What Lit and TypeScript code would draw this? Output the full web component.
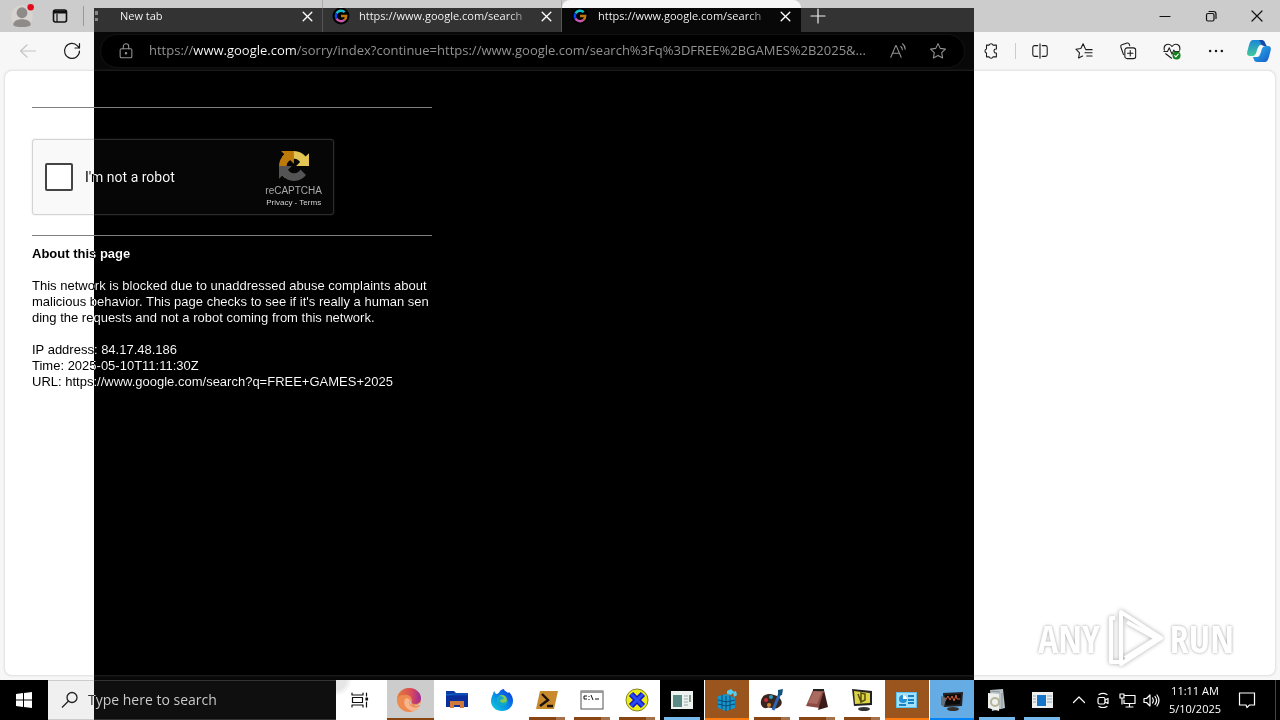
import { LitElement, html, css, svg, nothing } from "lit";
import { customElement, property } from "lit/decorators.js";

const icon = (size: number, body: unknown, box = "0 0 20 20") => html`<svg
  width=${size} height=${size} viewBox=${box} fill="none" stroke="currentColor"
  stroke-width="1.2" stroke-linecap="round" stroke-linejoin="round" aria-hidden="true">${body}</svg>`;

const glyph = {
  close: icon(13, svg`<path d="M2 2l8 8M10 2l-8 8"/>`, "0 0 12 12"),
  plus: icon(16, svg`<path d="M8 1v14M1 8h14"/>`, "0 0 16 16"),
  profile: icon(26, svg`<circle cx="12" cy="12" r="10" fill="#d6d3d1" stroke="none"/><circle cx="12" cy="9" r="5" fill="#8f8b88" stroke="none"/><path d="M4 20c0-3 3-5 8-5s8 2 8 5-16 3-16 0z" fill="#8f8b88" stroke="none"/><circle cx="20" cy="4" r="3" fill="#e00b1c" stroke="none"/>`, "0 0 24 24"),
  workspace: icon(16, svg`<rect x="1.5" y="2" width="13" height="12" rx="2" stroke-width="1.6"/><path d="M2 3h12v2H2z" fill="#111"/><path d="M5 6v7.500"/>`, "0 0 16 16"),
  minimize: icon(12, svg`<path d="M1 6.500h10"/>`, "0 0 12 12"),
  restore: icon(12, svg`<rect x="1.500" y="3.500" width="7.500" height="7.500" rx="1.500"/><path d="M4 1.500h4.500a2.500 2.500 0 0 1 2.500 2.500v4.500"/>`, "0 0 12 12"),
  closeWin: icon(12, svg`<path d="M1 1l10 10M11 1L1 11"/>`, "0 0 12 12"),
  back: icon(20, svg`<path d="M17.500 10H3M9 4l-6.500 6L9 16"/>`),
  reload: icon(20, svg`<path d="M17.500 10a7.500 7.500 0 1 1-2-5.200L17.500 7M17.500 2.500V7H13"/>`),
  lock: icon(18, svg`<rect x="3.500" y="7.500" width="13" height="10" rx="1.500"/><path d="M7 7.500V5a3 3 0 0 1 6 0v2.500"/><circle cx="10" cy="12.500" r=".8" fill="currentColor"/>`),
  read: icon(18, svg`<path d="M2 17L7.500 4h.500L13.500 17M4 12.500h7.500M13 5c1.200.8 1.800 2 1.800 3.500M15 2c2 1.500 3 3.500 3 6"/>`),
  star: icon(18, svg`<path d="M10 1.800l2.500 5.300 5.800.8-4.200 4 1 5.800-5.100-2.800-5.100 2.800 1-5.800-4.200-4 5.800-.8z"/>`),
  puzzle: icon(18, svg`<path d="M5 3.500h3a2.200 2.200 0 0 1 4.200 0H16v4.300c-3.500-.6-3.500 5 0 4.400v4.300h-3.800a2.200 2.200 0 0 1-4.200 0H5v-4.200a2.400 2.400 0 0 1 0-4.600z"/>`),
  split: icon(18, svg`<path d="M10 2v16M7.500 4H4a2 2 0 0 0-2 2v8a2 2 0 0 0 2 2h3.500M12.500 4H16a2 2 0 0 1 2 2v8a2 2 0 0 1-2 2h-3.500"/>`),
  favorites: icon(18, svg`<path d="M11.500 7.500L9 2 6.500 7.200 1 8l4 4-1 5.800 4.500-2.300M12 8.500h7M11 12h8M13 15.500h6"/>`),
  collections: icon(18, svg`<path d="M5 14L2 5.500c-.4-1.200.1-2 1.200-2.400L9 1.200c1.200-.3 2 .2 2.400 1.300l.5 1.500"/><rect x="6.500" y="6.500" width="12" height="12" rx="2.500"/><path d="M12.500 9.500v6M9.500 12.500h6"/>`),
  health: icon(18, svg`<path d="M1.500 9C0 2.500 7 .5 10 5c3-4.500 10-2.500 8.500 4M1 10.500h4l2-4 3 7 2-4.500 1 1.500h5M3 13l6.500 5"/><circle cx="15" cy="15" r="4.500" fill="#14831f" stroke="none"/><path d="M13 15.200l1.300 1.300 2.700-3" stroke="#fff"/>`),
  more: icon(18, svg`<g fill="currentColor" stroke="none"><circle cx="3.500" cy="10" r="1.400"/><circle cx="10" cy="10" r="1.400"/><circle cx="16.500" cy="10" r="1.400"/></g>`),
  copilot: html`<svg width="26" height="26" viewBox="0 0 26 26" aria-hidden="true">
    <defs><linearGradient id="ca" x1="0" y1="0" x2="0" y2="1"><stop offset="0" stop-color="#1a86d8"/><stop offset="1" stop-color="#43c99b"/></linearGradient>
    <linearGradient id="cb" x1="0" y1="0" x2="1" y2="1"><stop offset="0" stop-color="#2cb8ee"/><stop offset="1" stop-color="#1659c7"/></linearGradient></defs>
    <path d="M7 2h8c3 0 3 3 4 5h-4c-2 0-3 2-4 5-1 4-2 6-5 6H4c-4 0-3-4-2-7C3 7 4 2 7 2z" fill="url(#ca)"/>
    <path d="M19 24h-8c-3 0-3-3-4-5h4c2 0 3-2 4-5 1-4 2-6 5-6h2c4 0 3 4 2 7-1 4-2 9-5 9z" fill="url(#cb)"/>
    <path d="M13 2h3c3 0 3 4 5 6h-3c-2 0-3-3-5-6z" fill="#174aa8"/></svg>`,
  google: html`<svg width="18" height="18" viewBox="0 0 18 18" aria-hidden="true"><circle cx="9" cy="9" r="8.500" fill="#fff"/>
    <g fill="none" stroke-width="2.400"><path d="M12.700 5.200A5.200 5.200 0 0 0 4.500 6.400" stroke="#ea4335"/><path d="M4.500 6.400a5.200 5.200 0 0 0 0 5.200" stroke="#fbbc05"/><path d="M4.500 11.600a5.200 5.200 0 0 0 8 1.300" stroke="#34a853"/><path d="M12.500 12.900A5.200 5.200 0 0 0 14.200 9H9" stroke="#4285f4"/></g></svg>`,
  blank: html`<svg width="18" height="18" viewBox="0 0 18 18" aria-hidden="true"><path d="M2 4h3v4H2zM2 11h3v3H2z" fill="#777"/></svg>`,
  recaptcha: html`<svg width="30" height="30" viewBox="0 0 64 64" aria-hidden="true">
    <path d="M64 31.955l-.033-1.37V4.687l-7.16 7.16C50.948 4.674 42.033.093 32.05.093c-10.4 0-19.622 4.96-25.458 12.64l11.736 11.86a15.55 15.55 0 0 1 4.754-5.334c2.05-1.6 4.952-2.906 8.968-2.906.485 0 .86.057 1.135.163 4.976.393 9.288 3.14 11.828 7.124l-8.307 8.307L64 31.953" fill="#1c3aa9"/>
    <path d="M31.862.094l-1.37.033H4.594l7.16 7.16C4.58 13.147 0 22.06 0 32.046c0 10.4 4.96 19.622 12.64 25.458L24.5 45.768a15.55 15.55 0 0 1-5.334-4.754c-1.6-2.05-2.906-4.952-2.906-8.968 0-.485.057-.86.163-1.135.393-4.976 3.14-9.288 7.124-11.828l8.307 8.307L31.86.095" fill="#4285f4"/>
    <path d="M.001 32.045l.033 1.37v25.898l7.16-7.16c5.86 7.173 14.774 11.754 24.76 11.754 10.4 0 19.622-4.96 25.458-12.64l-11.736-11.86a15.55 15.55 0 0 1-4.754 5.334c-2.05 1.6-4.952 2.906-8.968 2.906-.485 0-.86-.057-1.135-.163-4.976-.393-9.288-3.14-11.828-7.124l8.307-8.307c-10.522.04-22.4.066-27.295-.005" fill="#ababab"/></svg>`,
};

const art = (body: unknown) => html`<svg width="24" height="24" viewBox="0 0 24 24" aria-hidden="true">${body}</svg>`;

interface App { name: string; tone: string; art: unknown; }

const apps: App[] = [
  { name: "Edge", tone: "current", art: art(svg`<defs><linearGradient id="ea" x1="0" y1="0" x2="1" y2="0"><stop offset="0" stop-color="#e08038"/><stop offset=".6" stop-color="#d9495c"/><stop offset="1" stop-color="#9c2a9c"/></linearGradient></defs>
    <circle cx="12" cy="12" r="12" fill="#ee8a50"/><path d="M0 11C1 4 6 0 12 0c7 0 12 5 12 10 0 4-3 6-6 6-3 0-4-1-3-3 0-5-4-7-8-6-4 0-6 2-7 4z" fill="url(#ea)"/>
    <path d="M8 11c-2 4 0 10 7 12 3 0 6-2 8-5-3 2-8 2-10-1-1-2-1-3 0-5-2-2-4-2-5-1z" fill="#f7b58e"/><path d="M13 12c-1 2 0 4 2 5 3 1 6 0 8-2 1 0 2 3-1 7h3V14c-1 4-9 6-11 1z" fill="#cfcfcf"/>`) },
  { name: "File Explorer", tone: "idle", art: art(svg`<path d="M1 3h8l2 2h12v14H1z" fill="#0c3aa5"/><path d="M1 8h22v11H1z" fill="#0a2f9c"/><path d="M1 7l9-1h13" stroke="#1264cf" fill="none"/><path d="M5 13h14v7h-4v-3H9v3H5z" fill="#cf7a3a"/>`) },
  { name: "Firefox", tone: "idle", art: art(svg`<defs><linearGradient id="fa" x1="1" y1="0" x2="0" y2="1"><stop offset="0" stop-color="#0b2be0"/><stop offset=".5" stop-color="#0886e8"/><stop offset="1" stop-color="#10d8d8"/></linearGradient></defs>
    <path d="M3 6l1-3 2 3c2 0 3-1 4-3 1-1 2-2 4-2 0 2 2 2 4 4l1-1c3 3 4 6 4 9 0 6-5 10-11 10S1 19 1 13c0-3 1-5 2-7z" fill="url(#fa)"/><circle cx="12" cy="12" r="5" fill="#82c95a"/><path d="M8 8c3-1 4 1 6 2-1 2-4 1-4 3 2 3 6 2 8-1 0 4-3 6-6 6-4 0-6-4-4-10z" fill="#11a9c5"/>`) },
  { name: "PowerShell", tone: "run", art: art(svg`<path d="M5 3h18l-4 18H1z" fill="#c98a2e"/><path d="M7 6l6 6-8 6M12 18h6" stroke="#1b120a" stroke-width="2.400" fill="none"/>`) },
  { name: "Command Prompt", tone: "run", art: art(svg`<rect x="1" y="3" width="22" height="18" fill="#fff" stroke="#555"/><path d="M1 4h22" stroke="#999" stroke-width="2"/><path d="M4 8h3M4 8v3h3M9 8v1M9 11v1M11 7l2 5M15 11h4" stroke="#111" fill="none"/>`) },
  { name: "Debugger", tone: "run", art: art(svg`<circle cx="12" cy="12" r="11" fill="#ecec18" stroke="#83832a"/><path d="M6 6l12 12M18 6L6 18" stroke="#1313c9" stroke-width="6"/><path d="M6 6l12 12M18 6L6 18" stroke="#294df0" stroke-width="3"/>`) },
  { name: "Document Viewer", tone: "dark", art: art(svg`<rect x="1" y="3" width="22" height="18" fill="#eef2ee"/><rect x="3" y="7" width="9" height="12" fill="#5b8a84"/><path d="M14 8h4M14 11h4M14 14h4M14 17h4" stroke="#9aa" /><path d="M20 7v7" stroke="#243"/>`) },
  { name: "Registry Editor", tone: "brown", art: art(svg`<path d="M3 8l8-2 9 4v10l-9 3-8-3z" fill="#1697cc"/><path d="M3 12l8 2 9-2M3 16l8 2 9-2M7 7v14M11 8v15M15 8v14" stroke="#0a4a78" fill="none"/><path d="M12 3l4-2 3 3-3 3-4-1zM18 4l3-1 1 4-3 2z" fill="#4fd0f5"/>`) },
  { name: "Paint", tone: "run", art: art(svg`<path d="M1 13C2 6 9 5 14 7c8 2 10 9 5 12-5 4-9-1-12 1-4 1-7-3-6-7z" fill="#3b241b"/><circle cx="6" cy="12" r="2" fill="#c32e3b"/><circle cx="11" cy="9" r="2" fill="#2a9cc1"/><circle cx="9" cy="17" r="2" fill="#d28a30"/><path d="M13 22l7-17" stroke="#2a66b5" stroke-width="3"/><path d="M18 2l5-1-1 6-4 1z" fill="#15507f"/>`) },
  { name: "Notebook", tone: "run", art: art(svg`<path d="M8 2h11l-4 18L1 18z" fill="#8b4b42"/><path d="M9 3l8 1-5 12-9-1z" fill="#a96a60"/><path d="M19 2l4 17-10 3z" fill="#3b1a1a"/><path d="M8 2h11" stroke="#222" stroke-width="2"/>`) },
  { name: "Display", tone: "run", art: art(svg`<path d="M2 1l20 2v14L4 18z" fill="#222"/><path d="M4 3l16 2v10L5 16z" fill="#dcd444"/><path d="M8 6l3 8M11 5l4 1v6l-4 2z" stroke="#55500f" stroke-width="1.500" fill="none"/><ellipse cx="14" cy="21" rx="6" ry="2" fill="#333"/>`) },
  { name: "Control Panel", tone: "brown", art: art(svg`<rect x="1" y="4" width="21" height="16" fill="#5cc3f0"/><rect x="2" y="5" width="19" height="14" fill="#a5e0fa"/><path d="M13 8h6M13 12h6M13 15h6M4 17h7" stroke="#1681c5" stroke-width="2"/><circle cx="8" cy="11" r="4" fill="#2290d3"/><path d="M8 11V7a4 4 0 0 1 4 4z" fill="#fff"/>`) },
  { name: "Monitor", tone: "blue", art: art(svg`<path d="M3 5l20-1-1 14-18 1z" fill="#252325"/><path d="M5 7l16-1-1 10-14 1z" fill="#0b0b0b"/><path d="M5 13l3-5 2 4 2-4 2 5 2-6 1 4h3" stroke="#d56035" fill="none"/><path d="M1 8l5 2-2 9-3-2z" fill="#66707a"/><ellipse cx="13" cy="21" rx="6" ry="2" fill="#35302f"/>`) },
  { name: "Sticky Files", tone: "edge", art: art(svg`<path d="M5 2l13-1 2 19-13 3z" fill="#b9c2c8"/><path d="M3 5l11 1v17L3 20z" fill="#eef0ee"/><circle cx="10" cy="14" r="4" fill="none" stroke="#b4b49a" stroke-width="2"/><path d="M5 3l10 1M17 5v16" stroke="#8a9397"/>`) },
  { name: "Reader", tone: "edge", art: art(svg`<rect x="2" y="4" width="21" height="16" fill="#eee"/><rect x="7" y="7" width="9" height="11" fill="#1675cb"/><path d="M3 8h3M3 11h3M3 14h3M17 8h5M17 11h5M17 14h5" stroke="#8ab"/>`) },
];

@customElement("browser-tab")
class BrowserTab extends LitElement {
  @property() label = "";
  @property({ type: Boolean, reflect: true }) active = false;
  @property({ type: Boolean }) blank = false;
  static styles = css`
    :host { display: flex; align-items: center; flex: 0 1 239px; min-width: 0; box-sizing: border-box; padding: 0 7px 0 9px; border-right: 1px solid #aaa; color: #000; }
    :host([active]) { background: #f7f7f7; border-right-color: #f7f7f7; border-radius: 8px 8px 0 0; }
    button { font: inherit; color: inherit; border: 0; background: none; padding: 0; }
    .page { display: flex; align-items: center; gap: 9px; flex: 1; min-width: 0; text-align: left; }
    .fav { width: 18px; height: 18px; flex: none; }
    .text { overflow: hidden; white-space: nowrap; flex: 1; mask-image: linear-gradient(to right, #000 148px, transparent 178px); }
    .close { width: 16px; height: 16px; display: grid; place-items: center; flex: none; }
  `;
  render() {
    return html`<button class="page" role="tab" aria-selected=${this.active}>
        <span class="fav">${this.blank ? glyph.blank : glyph.google}</span><span class="text">${this.label}</span>
      </button><button class="close" aria-label="Close tab">${glyph.close}</button>`;
  }
}

@customElement("app-root")
class AppRoot extends LitElement {
  static styles = css`
    :host { display: flex; flex-direction: column; min-height: 100vh; position: relative; isolation: isolate; background: #f7f7f7; color: #000; font: 11px/16px "Open Sans", "Noto Sans", sans-serif; }
    * { box-sizing: border-box; }
    button { font: inherit; color: inherit; border: 0; background: none; padding: 0; display: grid; place-items: center; flex: none; }
    svg { display: block; }
    input { margin: 0; }

    .negative { position: absolute; inset: 8px 306px 0 94px; background: #fff; mix-blend-mode: difference; pointer-events: none; z-index: 1; }

    .titlebar { display: flex; height: 32px; background: #ccc; color: #111; }
    .profile { width: 44px; }
    .spaces { width: 32px; }
    .rule { width: 1px; height: 20px; background: #999; margin: 6px 0 0 7px; }
    .tabs { display: flex; flex: 0 1 717px; min-width: 0; }
    .add { width: 34px; }
    .space { flex: 1; }
    .win { width: 46px; }

    .toolbar { display: flex; align-items: center; height: 38px; padding-left: 6px; color: #1b1b1b; }
    .tool { width: 44px; height: 32px; }
    .copilot { width: 42px; }
    .back { color: #c4c4c4; }
    .split { width: 1px; height: 16px; background: #ccc; margin: 0 2px; }
    .address { flex: 1; min-width: 0; display: flex; align-items: center; height: 34px; margin: 0 4px 0 6px; border: 1px solid #eee; border-radius: 17px; background: #fff; color: #6e6e6e; padding: 0 6px 0 16px; }
    .site { width: 18px; margin-right: 14px; }
    .url { flex: 1; min-width: 0; display: grid; font-size: 13px; line-height: 20px; }
    .url > * { grid-area: 1 / 1; min-width: 0; }
    .url input { border: 0; background: transparent; outline: 0; width: 100%; font: inherit; }
    .shown { white-space: nowrap; }
    .host { color: #000; }
    .act { width: 40px; }

    .page { flex: 1; display: flex; justify-content: space-between; margin: 0 4px 4px; padding: 36px 27px; background: #fff; border: 1px solid #e6e6e6; border-radius: 8px; box-shadow: 0 0 2px #ddd; font: 13px/16px "Liberation Sans", Arial, sans-serif; }
    .notice { width: 400px; }
    hr { border: 0; height: 1px; background: #808080; margin: 0; }
    .captcha { display: flex; align-items: center; width: 302px; height: 76px; margin: 31px 0 20px; border: 1px solid #d3d3d3; border-radius: 3px; background: #f9f9f9; padding: 0 11px 0 12px; box-shadow: 0 0 2px #ddd; }
    .robot { display: flex; align-items: center; gap: 12px; flex: 1; font: 14px/17px Roboto, sans-serif; }
    .robot input { appearance: none; width: 28px; height: 28px; border: 2px solid #444; border-radius: 2px; background: #fff; }
    .brand { display: flex; flex-direction: column; align-items: center; color: #555; font-size: 10px; line-height: 12px; padding-top: 6px; }
    .brand svg { margin-bottom: 4px; }
    .legal { font-size: 8px; line-height: 12px; color: #222; }
    .legal a { color: inherit; text-decoration: none; }
    h1 { font-size: 13px; line-height: 16px; margin: 10px 0 16px; }
    p { margin: 0 0 16px; white-space: nowrap; }
    .mark { align-self: flex-end; display: flex; align-items: center; gap: 5px; margin: 0 14px -29px 0; font: bold 38px/48px "Liberation Sans Narrow", "Open Sans Condensed", "Roboto Condensed", "Liberation Sans", sans-serif; color: #fff; text-shadow: 0 0 3px #999; }
    .mark svg { filter: drop-shadow(0 0 2px #aaa); }

    .taskbar { display: flex; height: 40px; background: #000; color: #fff; }
    .start { width: 48px; }
    .find { display: flex; align-items: center; flex: 0 1 288px; min-width: 0; gap: 9px; padding-left: 13px; background: #f0f0f0; border: 1px solid #ccc; border-width: 1px 0; color: #222; }
    .find input { border: 0; background: none; outline: 0; padding: 0; flex: 1; min-width: 0; font: 14px/20px "Open Sans", "Noto Sans", sans-serif; color: #222; }
    .find input::placeholder { color: #333; opacity: 1; }
    .apps { display: flex; gap: 1px; position: relative; z-index: 2; background: linear-gradient(to right, #fff 638px, #000 638px); }
    .view { width: 48px; margin-right: 2px; color: #111; background: radial-gradient(circle at 0 0, #e6e6e6 10px, transparent 16px); }
    .app { width: 44px; height: 40px; padding-top: 1px; border-bottom: 2px solid transparent; position: relative; }
    .run::after, .dark::after, .edge::after { content: ""; position: absolute; inset: 37px 4px -2px; background: linear-gradient(to right, #894612 27px, #a5714a 27px); }
    .current { width: 47px; padding-right: 3px; background: #ccc; border-color: #894612; }
    .dark, .edge { background: #000; }
    .dark::after, .edge::after { background: #76b9ed; }
    .brown { background: #9a541d; border-color: #ff7b10; }
    .blue { background: #65abe4; border-color: #0084f5; }
    .tray { display: flex; flex: 1; justify-content: flex-end; padding-right: 4px; }
    .icon { width: 24px; }
    .clock { width: 64px; line-height: 18px; white-space: nowrap; text-align: center; }
    .bell { width: 40px; }
    .peek { width: 1px; margin-left: 8px; background: #444; }
  `;

  render() {
    return html`
      <header class="titlebar">
        <button class="profile" aria-label="Profile">${glyph.profile}</button>
        <button class="spaces" aria-label="Workspaces">${glyph.workspace}</button>
        <span class="rule"></span>
        <div class="tabs" role="tablist">
          <browser-tab label="New tab" blank></browser-tab>
          <browser-tab label="https://www.google.com/search"></browser-tab>
          <browser-tab label="https://www.google.com/search" active></browser-tab>
        </div>
        <button class="add" aria-label="New tab">${glyph.plus}</button>
        <span class="space"></span>
        <button class="win" aria-label="Minimize">${glyph.minimize}</button>
        <button class="win" aria-label="Restore">${glyph.restore}</button>
        <button class="win" aria-label="Close">${glyph.closeWin}</button>
      </header>
      <nav class="toolbar">
        <button class="tool back" aria-label="Back">${glyph.back}</button>
        <button class="tool" aria-label="Refresh">${glyph.reload}</button>
        <div class="address">
          <button class="site" aria-label="Site information">${glyph.lock}</button>
          <label class="url"><span class="shown">https://<span class="host">www.google.com</span>/sorry/index?continue=https://www.google.com/search%3Fq%3DFREE%2BGAMES%2B2025&amp;...</span><input type="text" aria-label="Address"></label>
          <button class="act" aria-label="Read aloud">${glyph.read}</button>
          <button class="act" aria-label="Add to favorites">${glyph.star}</button>
        </div>
        <button class="tool" aria-label="Extensions">${glyph.puzzle}</button>
        <span class="split"></span>
        <button class="tool" aria-label="Split screen">${glyph.split}</button>
        <button class="tool" aria-label="Favorites">${glyph.favorites}</button>
        <button class="tool" aria-label="Collections">${glyph.collections}</button>
        <button class="tool" aria-label="Browser essentials">${glyph.health}</button>
        <button class="tool" aria-label="Settings and more">${glyph.more}</button>
        <button class="tool copilot" aria-label="Copilot">${glyph.copilot}</button>
      </nav>
      <main class="page">
        <section class="notice">
          <hr>
          <div class="captcha">
            <label class="robot"><input type="checkbox">I'm not a robot</label>
            <div class="brand">${glyph.recaptcha}<span>reCAPTCHA</span>
              <span class="legal"><a href="#privacy">Privacy</a> - <a href="#terms">Terms</a></span></div>
          </div>
          <hr>
          <h1>About this page</h1>
          <p>This network is blocked due to unaddressed abuse complaints about<br>malicious behavior. This page checks to see if it's really a human sen<br>ding the requests and not a robot coming from this network.</p>
          <p>IP address: 84.17.48.186<br>Time: 2025-05-10T11:11:30Z<br>URL: https://www.google.com/search?q=FREE+GAMES+2025</p>
        </section>
        <div class="mark"><span>ANY</span><svg width="60" height="60" viewBox="0 0 60 60" fill="none" stroke="#fff" stroke-width="4" stroke-linejoin="round" aria-hidden="true"><path d="M16 4v52l40-26zM10 10H6v44h8M22 14l32 18M20 50l32-20"/></svg><span>RUN</span></div>
      </main>
      <footer class="taskbar">
        <button class="start" aria-label="Start"><svg width="16" height="16" viewBox="0 0 16 16" aria-hidden="true"><path d="M0 2l7-1v6.500H0zM8 1l8-1v7.500H8zM0 8.500h7V15l-7-1zM8 8.500h8V16l-8-1z" fill="#fff"/></svg></button>
        <label class="find"><svg width="18" height="18" viewBox="0 0 18 18" fill="none" stroke="#222" stroke-width="1.300" aria-hidden="true"><circle cx="11" cy="6.500" r="5"/><path d="M7.500 10L1 16.500"/></svg><input type="text" aria-label="Search" placeholder="Type here to search"></label>
        <div class="apps">
          <button class="view" aria-label="Task View">${icon(18, svg`<path d="M1 2v2h11V2M1 16v-2h11v2M1.500 6.500h10v5h-10zM15.500 2v3M15.500 11v5"/><path d="M15 7h1.500v2H15z" fill="currentColor"/>`, "0 0 18 18")}</button>
          ${apps.map((a) => html`<button class="app ${a.tone}" aria-label=${a.name}>${a.art ?? nothing}</button>`)}
        </div>
        <div class="tray">
          <button class="icon" aria-label="Show hidden icons">${icon(14, svg`<path d="M1.500 9.500L7 4l5.500 5.500"/>`, "0 0 14 14")}</button>
          <button class="icon" aria-label="Meet Now">${icon(16, svg`<path d="M4 2.500c2.500-1.500 5.500-1.500 8 0M4 14.500c2.500 1.500 5.500 1.500 8 0"/><rect x="3" y="5.500" width="7" height="6.500" rx="1.500"/><path d="M10 8l3-1.500v5L10 10"/>`, "0 0 16 16")}</button>
          <button class="icon" aria-label="Network">${icon(17, svg`<path d="M6 3.500h10v8H5V8M10.500 11.500V15M7 15h7M1 2h4v4H1zM3 6v6"/>`, "0 0 17 17")}</button>
          <button class="icon" aria-label="Volume">${icon(17, svg`<path d="M1 6.500h2.500L7 3v11l-3.500-3.500H1zM9.500 6c1 1.500 1 3.500 0 5M12 4.500c2 2.500 2 5.500 0 8M14 3c2.500 3.500 2.500 7.500 0 11"/>`, "0 0 17 17")}</button>
          <button class="clock"><span>11:11 AM<br>5/10/2025</span></button>
          <button class="bell" aria-label="Notifications">${icon(18, svg`<path d="M1.500 2h15v12h-5L9 16.500 8 14H1.500z" stroke-linejoin="miter"/>`, "0 0 18 18")}</button>
          <span class="peek"></span>
        </div>
      </footer>
      <div class="negative"></div>`;
  }
}
